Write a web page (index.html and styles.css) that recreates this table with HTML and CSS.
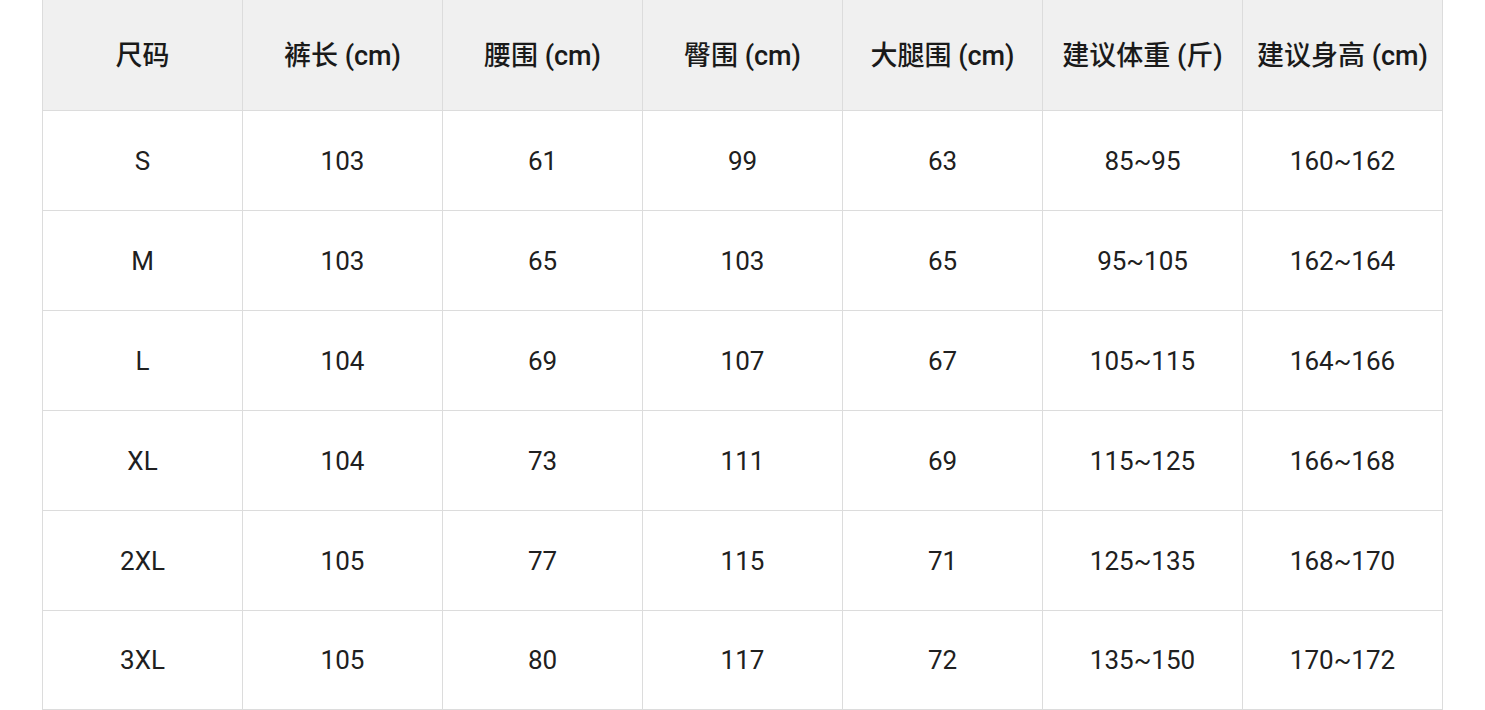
FILE: index.html
```html
<!DOCTYPE html>
<html lang="zh">
<head>
<meta charset="utf-8">
<link rel="stylesheet" href="styles.css">
</head>
<body>
<div class="wrap">
<table class="size-table">
<thead>
<tr><th>尺码</th><th>裤长 (cm)</th><th>腰围 (cm)</th><th>臀围 (cm)</th><th>大腿围 (cm)</th><th>建议体重 (斤)</th><th>建议身高 (cm)</th></tr>
</thead>
<tbody>
<tr><td>S</td><td>103</td><td>61</td><td>99</td><td>63</td><td>85~95</td><td>160~162</td></tr>
<tr><td>M</td><td>103</td><td>65</td><td>103</td><td>65</td><td>95~105</td><td>162~164</td></tr>
<tr><td>L</td><td>104</td><td>69</td><td>107</td><td>67</td><td>105~115</td><td>164~166</td></tr>
<tr><td>XL</td><td>104</td><td>73</td><td>111</td><td>69</td><td>115~125</td><td>166~168</td></tr>
<tr><td>2XL</td><td>105</td><td>77</td><td>115</td><td>71</td><td>125~135</td><td>168~170</td></tr>
<tr class="last"><td>3XL</td><td>105</td><td>80</td><td>117</td><td>72</td><td>135~150</td><td>170~172</td></tr>
</tbody>
</table>
</div>
</body>
</html>
```
FILE: styles.css
```css
html, body {
  margin: 0;
  padding: 0;
  background: #ffffff;
}
.wrap {
  padding-left: 42px;
}
.size-table {
  border-collapse: collapse;
  table-layout: fixed;
  width: 1401px;
  font-family: "Roboto", "Noto Sans CJK SC", sans-serif;
  color: #1a1a1a;
}
.size-table th,
.size-table td {
  border: 1px solid #dcdcdc;
  text-align: center;
  vertical-align: middle;
  padding: 0;
}
.size-table th {
  border-top: 0;
  height: 106px;
  padding-bottom: 4px;
  background: #f0f0f0;
  font-weight: 500;
  font-size: 27px;
}
.size-table td {
  height: 99px;
  font-weight: 400;
  font-size: 26px;
  color: #202020;
}
.size-table .last td {
  height: 98px;
}
```
